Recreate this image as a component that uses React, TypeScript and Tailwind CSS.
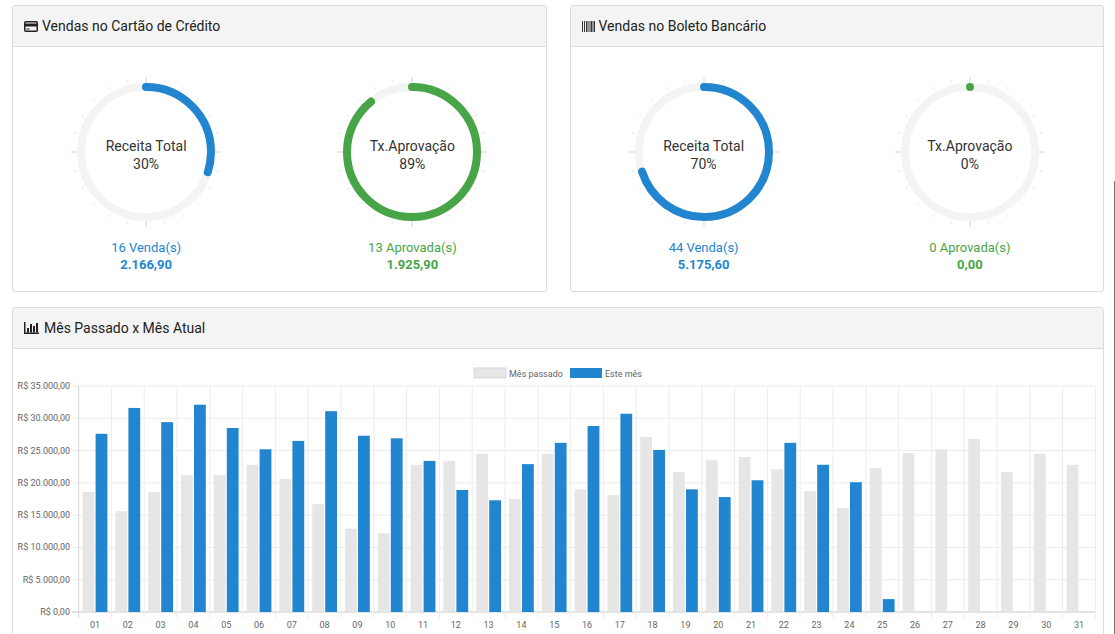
import React from "react";

const BLUE = "#2186cf";
const GREEN = "#47a547";

const prev = [18.6, 15.6, 18.6, 21.2, 21.2, 22.8, 20.6, 16.7, 12.9, 12.2, 22.8, 23.4, 24.5, 17.5, 24.5, 19.0, 18.1, 27.1, 21.7, 23.5, 24.0, 22.1, 18.7, 16.1, 22.3, 24.6, 25.2, 26.8, 21.7, 24.5, 22.8];
const cur = [27.6, 31.6, 29.4, 32.1, 28.5, 25.2, 26.5, 31.1, 27.3, 26.9, 23.4, 18.9, 17.3, 22.9, 26.2, 28.8, 30.7, 25.1, 19.0, 17.8, 20.4, 26.2, 22.8, 20.1, 2.0];

function CardIcon() {
  return (
    <svg width="14" height="11" viewBox="0 0 14 11" className="mr-[4px]">
      <rect x="0.75" y="0.75" width="12.5" height="9.5" rx="1" fill="none" stroke="#222" strokeWidth="1.5" />
      <rect x="1" y="2.5" width="12" height="3" fill="#222" />
      <rect x="2.5" y="7.5" width="3" height="1" fill="#222" />
    </svg>
  );
}

function BarcodeIcon() {
  const bars = [[0, 1], [2, 1], [4, 1.5], [6.5, 1], [8.5, 2], [11.5, 1.5]];
  return (
    <svg width="13" height="11" viewBox="0 0 13 11" className="mr-[4px]">
      {bars.map(([x, w], i) => (
        <rect key={i} x={x} y="0" width={w} height="11" fill="#333" />
      ))}
    </svg>
  );
}

function ChartIcon() {
  return (
    <svg width="15" height="12" viewBox="0 0 15 12" className="mr-[5px]">
      <path d="M0.75 0 V11.25 H15" fill="none" stroke="#222" strokeWidth="1.5" />
      <rect x="3" y="6" width="2" height="4.5" fill="#222" />
      <rect x="6" y="2" width="2" height="8.5" fill="#222" />
      <rect x="9" y="4" width="2" height="6.5" fill="#222" />
      <rect x="12" y="1" width="2" height="9.5" fill="#222" />
    </svg>
  );
}

function Gauge({ label, pct, color, count, amount }: { label: string; pct: number; color: string; count: string; amount: string }) {
  const r = 65;
  const c = 2 * Math.PI * r;
  const ticks = Array.from({ length: 24 }, (_, i) => i);
  return (
    <div className="flex flex-col items-center">
      <div className="relative w-[170px] h-[170px]">
        <svg width="170" height="170" viewBox="0 0 170 170">
          {ticks.map((i) => {
            const a = (i * 15 * Math.PI) / 180;
            const major = i % 6 === 0;
            const r1 = major ? 69 : 72;
            const r2 = 75;
            return (
              <line
                key={i}
                x1={85 + Math.sin(a) * r1}
                y1={85 - Math.cos(a) * r1}
                x2={85 + Math.sin(a) * r2}
                y2={85 - Math.cos(a) * r2}
                stroke={major ? "#d4d4d4" : "#e4e4e4"}
                strokeWidth="1"
              />
            );
          })}
          <circle cx="85" cy="85" r={r} fill="none" stroke="#f4f4f4" strokeWidth="8" />
          {pct > 0 ? (
            <circle
              cx="85"
              cy="85"
              r={r}
              fill="none"
              stroke={color}
              strokeWidth="8"
              strokeLinecap="round"
              strokeDasharray={`${(c * pct) / 100} ${c}`}
              transform="rotate(-90 85 85)"
            />
          ) : (
            <circle cx="85" cy={85 - r} r="4" fill={color} />
          )}
        </svg>
        <div className="absolute inset-0 pt-[6px] flex flex-col items-center justify-center text-[14px] leading-[18px] text-[#333]">
          <span>{label}</span>
          <span>{pct}%</span>
        </div>
      </div>
      <div className="mt-[2px] text-[13px] leading-[17px] text-center" style={{ color }}>
        <div>{count}</div>
        <div className="font-bold">{amount}</div>
      </div>
    </div>
  );
}

function Card({ icon, title, children }: { icon: React.ReactNode; title: string; children: React.ReactNode }) {
  return (
    <div className="border border-[#dcdcdc] rounded-[3px] bg-white overflow-hidden">
      <div className="h-[41px] bg-[#f4f4f4] border-b border-[#dcdcdc] flex items-center px-[11px] text-[14px] text-[#222]">
        {icon}
        <span>{title}</span>
      </div>
      {children}
    </div>
  );
}

function BarChart() {
  const L = 65.6;
  const catW = 32.8;
  const R = L + catW * 31;
  const y0 = 263;
  const k = 226 / 35;
  const yTicks = [0, 5, 10, 15, 20, 25, 30, 35];
  const fmt = (v: number) => (v === 0 ? "R$ 0,00" : `R$ ${v}.000,00`);
  return (
    <svg width="1090" height="286" viewBox="0 0 1090 286" className="block" fontFamily="Roboto, 'Liberation Sans', sans-serif">
      <rect x="461" y="19" width="32" height="10" fill="#e6e6e6" stroke="#d8d8d8" strokeWidth="1" />
      <text x="496" y="27.5" fontSize="9" fill="#666">Mês passado</text>
      <rect x="557" y="19" width="32" height="10" fill={BLUE} />
      <text x="592" y="27.5" fontSize="9" fill="#666">Este mês</text>
      {yTicks.map((v) => {
        const y = y0 - v * k;
        return (
          <g key={v}>
            <line x1="59" y1={y} x2={R} y2={y} stroke={v === 0 ? "#c8c8c8" : "#ececec"} strokeWidth="1" />
            <text x="57" y={y + 3} fontSize="9" fill="#666" textAnchor="end">{fmt(v)}</text>
          </g>
        );
      })}
      {Array.from({ length: 32 }, (_, i) => (
        <line key={i} x1={L + i * catW} y1={y0 - 226} x2={L + i * catW} y2={y0 + 6} stroke={i === 0 ? "#d4d4d4" : "#ececec"} strokeWidth="1" />
      ))}
      {prev.map((v, i) => {
        const cx = L + catW * i + catW / 2;
        const h = v * k;
        return <rect key={`p${i}`} x={cx - 12.4} y={y0 - h} width="11.8" height={h} fill="#e6e6e6" />;
      })}
      {cur.map((v, i) => {
        const cx = L + catW * i + catW / 2;
        const h = v * k;
        return <rect key={`c${i}`} x={cx + 0.6} y={y0 - h} width="11.8" height={h} fill={BLUE} />;
      })}
      {prev.map((_, i) => (
        <text key={`x${i}`} x={L + catW * i + catW / 2} y="279" fontSize="9" fill="#666" textAnchor="middle">
          {String(i + 1).padStart(2, "0")}
        </text>
      ))}
    </svg>
  );
}

export default function App() {
  return (
    <div className="relative h-[634px] overflow-hidden bg-white pt-[5px] pl-[12px] pr-[11px] font-['Roboto','Liberation_Sans',sans-serif]">
      <div className="grid grid-cols-2 gap-[23px]">
        <Card icon={<CardIcon />} title="Vendas no Cartão de Crédito">
          <div className="grid grid-cols-2 pt-[20px] pb-[18px]">
            <Gauge label="Receita Total" pct={30} color={BLUE} count="16 Venda(s)" amount="2.166,90" />
            <Gauge label="Tx.Aprovação" pct={89} color={GREEN} count="13 Aprovada(s)" amount="1.925,90" />
          </div>
        </Card>
        <Card icon={<BarcodeIcon />} title="Vendas no Boleto Bancário">
          <div className="grid grid-cols-2 pt-[20px] pb-[18px]">
            <Gauge label="Receita Total" pct={70} color={BLUE} count="44 Venda(s)" amount="5.175,60" />
            <Gauge label="Tx.Aprovação" pct={0} color={GREEN} count="0 Aprovada(s)" amount="0,00" />
          </div>
        </Card>
      </div>
      <div className="mt-[15px]">
        <Card icon={<ChartIcon />} title="Mês Passado x Mês Atual">
          <div className="pb-[40px]">
            <BarChart />
          </div>
        </Card>
      </div>
      <div className="absolute right-0 top-[181px] bottom-0 w-[1px] bg-[#777]" />
    </div>
  );
}
